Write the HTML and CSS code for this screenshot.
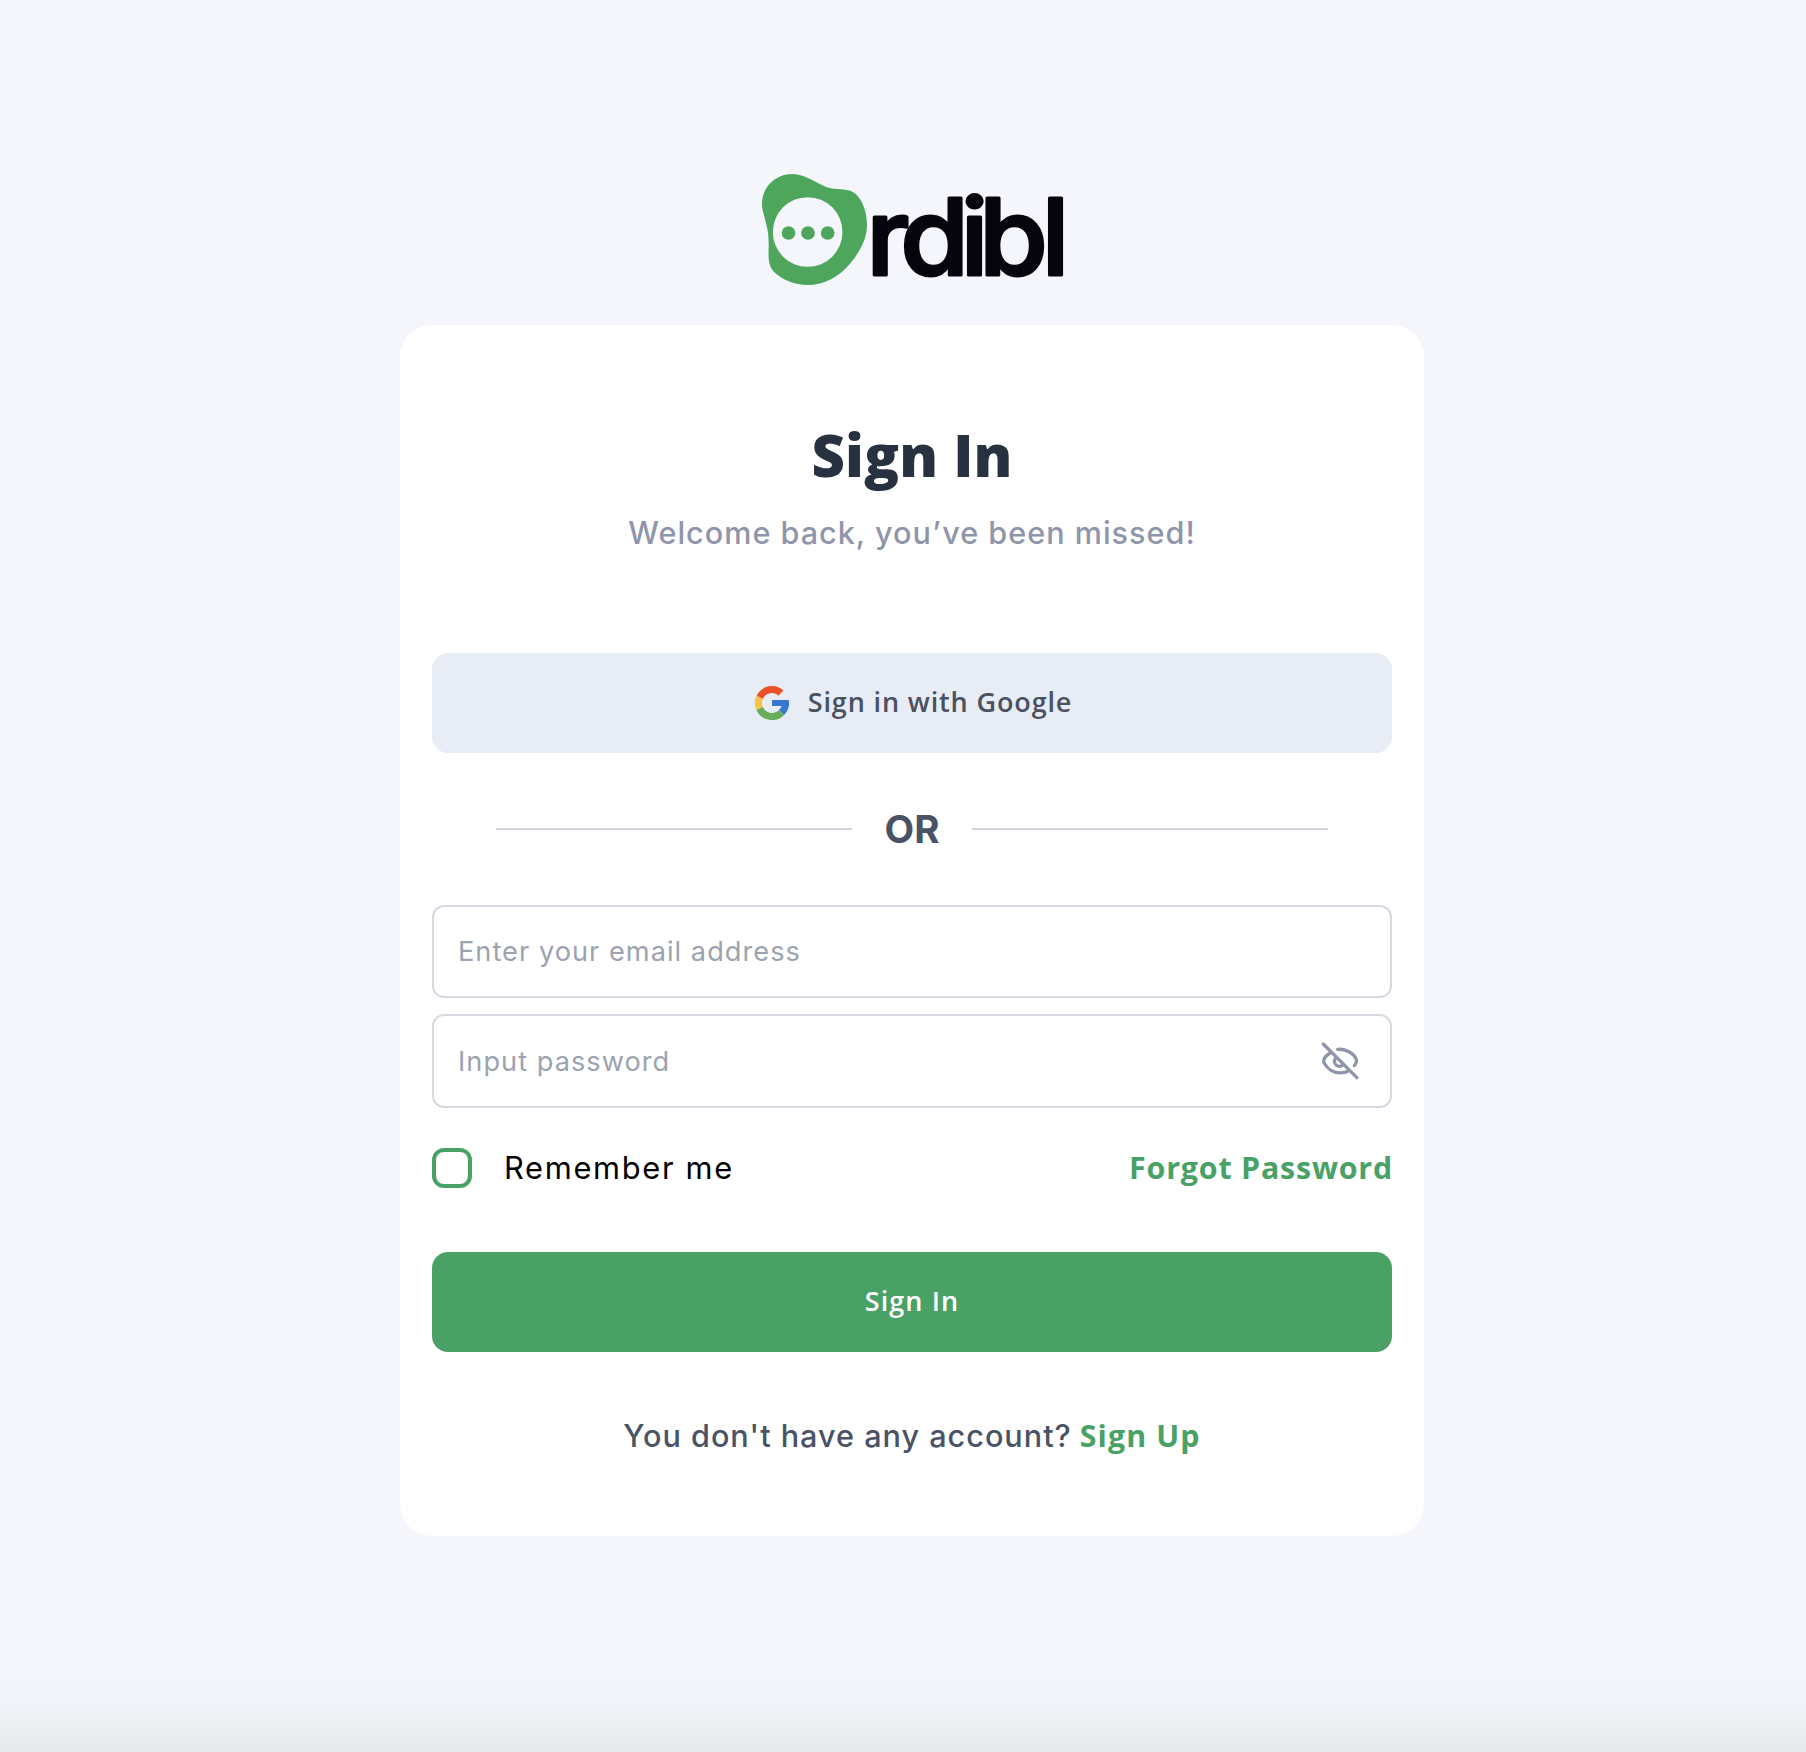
FILE: index.html
```html
<!DOCTYPE html>
<html lang="en">
<head>
<meta charset="utf-8">
<title>Ordibl – Sign In</title>
<link rel="stylesheet" href="styles.css">
</head>
<body>
<main class="page">
  <svg class="logo" viewBox="0 0 344 140" role="img" aria-label="Ordibl">
    <g transform="scale(.33333)">
      <path fill="#4ea65c" d="M156 42C190 42 222 64 250 77C280 91 305 84 330 92C362 103 381 150 381 194C381 236 360 275 330 311C300 347 255 375 202 375C165 375 128 361 103 337C84 317 85 290 86 262C87 215 80 200 75 178C71 160 66 150 66 132C66 80 108 42 156 42Z"/>
      <circle cx="203" cy="216" r="104.500" fill="#f4f6fb"/>
      <g fill="#4ea65c"><circle cx="145.500" cy="219" r="20.500"/><circle cx="204" cy="219" r="20.500"/><circle cx="263" cy="219" r="20.500"/></g>
    </g>
    <text class="wordmark" transform="scale(1.05 1)" x="120.300 152.600 210 227.700 287.200" y="114.800">rdibl</text>
  </svg>

  <section class="card">
    <h1 class="title">Sign In</h1>
    <p class="subtitle">Welcome back, you’ve been missed!</p>

    <button class="btn btn-google" type="button">
      <svg class="google" viewBox="-51 -51 102 102" fill="none" stroke-width="21">
        <path stroke="#f6c344" d="M-37 16.500A40.500 40.500 0 0 1-36.600-17.400"/>
        <path stroke="#ec5228" d="M-36.600-17.400A40.500 40.500 0 0 1 27-30"/>
        <path stroke="#69ad5c" d="M29 28.500A40.500 40.500 0 0 1-37 16.500"/>
        <path stroke="#3977cc" d="M40.500 0A40.500 40.500 0 0 1 29 28.500"/>
        <path fill="#3977cc" d="M0-9H50Q52 0 50 9H0Z"/>
      </svg>
      <span class="btn-label">Sign in with Google</span>
    </button>

    <div class="divider"><span>OR</span></div>

    <form class="form">
      <input class="field" type="email" placeholder="Enter your email address">
      <div class="field-password">
        <input class="field" type="password" placeholder="Input password">
        <svg class="eye" viewBox="0 0 60 60" fill="none" stroke="#8f95aa" stroke-width="3.300" stroke-linecap="round">
          <path d="M27.700 19.300C35 18.800 43 22.800 46 28.500C47.200 31 46.500 33 44.300 35.700"/>
          <path d="M20 23C17 24.800 15 27 13.900 29.300C13.200 31 13.600 32 14.700 33.800C17.500 39 23.500 42.900 30.200 42.900C33.500 42.900 36.500 42.200 39.300 40.600"/>
          <path d="M25.600 28.300A4.900 4.900 0 1 0 33.200 34.500"/>
          <path d="M13.300 14L46.900 47.700"/>
        </svg>
      </div>

      <div class="options">
        <label class="remember"><span class="checkbox"></span><span class="remember-label">Remember me</span></label>
        <a class="link forgot">Forgot Password</a>
      </div>

      <button class="btn btn-primary" type="button"><span class="btn-label">Sign In</span></button>
    </form>

    <p class="signup"><span class="question">You don't have any account?</span><a class="link">Sign Up</a></p>
  </section>
</main>
</body>
</html>
```
FILE: styles.css
```css
* { box-sizing: border-box; }

body {
  margin: 0;
  min-height: 1752px;
  background: linear-gradient(to bottom, #f4f6fb 1670px, #f1f3f8 1708px, #e6e7eb 1752px);
  font-family: Inter, "Liberation Sans", sans-serif;
}

.page {
  display: flex;
  flex-direction: column;
  align-items: center;
  padding: 160px 0 0 18px;
}

.logo {
  display: block;
  width: 344px;
  height: 140px;
}

.wordmark {
  font: 500 106px Inter, sans-serif;
  fill: #06040d;
  stroke: #06040d;
  stroke-width: 3px;
  stroke-linejoin: round;
}

.card {
  width: 1024px;
  height: 1211px;
  margin-top: 25px;
  padding: 95px 32px 0;
  border-radius: 32px;
  background: #fff;
}

.title {
  margin: 0;
  font: 800 58px/70px "Open Sans", sans-serif;
  letter-spacing: 0.1px;
  text-align: center;
  color: #27313f;
}

.subtitle {
  margin: 24px 0 101px;
  font-size: 30.6px;
  font-weight: 500;
  line-height: 38px;
  letter-spacing: 1px;
  text-align: center;
  color: #8f95aa;
}

.btn {
  display: flex;
  align-items: center;
  justify-content: center;
  width: 100%;
  height: 100px;
  padding: 0;
  border: 0;
  border-radius: 16px;
  font: 600 27px/36px "Open Sans", sans-serif;
}

.btn-label { margin-bottom: 3px; }

.btn-google {
  gap: 19px;
  padding-left: 3px;
  background: #e8ecf4;
  color: #4a5261;
  letter-spacing: 0.86px;
}

.google {
  width: 34px;
  height: 34px;
}

.divider {
  display: flex;
  align-items: center;
  gap: 32px;
  height: 48px;
  margin: 52px 64px;
  font-size: 38.5px;
  font-weight: 700;
  color: #4a5366;
}

.divider span {
  width: 56px;
  margin-bottom: 1px;
  text-align: center;
}

.divider::before,
.divider::after {
  content: "";
  flex: 1;
  height: 2px;
  background: #d1d5db;
}

.form {
  display: flex;
  flex-direction: column;
}

.field {
  display: block;
  width: 100%;
  height: 93px;
  padding: 0 24px;
  border: 2px solid #d8d8e2;
  border-radius: 12px;
  background: #fff;
  font: 400 27.2px Inter, sans-serif;
  letter-spacing: 1.02px;
}

.field::placeholder {
  color: #9ca3af;
  opacity: 1;
}

.field-password {
  position: relative;
  margin-top: 16px;
}

.field-password .field { height: 94px; }

.eye {
  position: absolute;
  top: 16px;
  right: 22px;
  width: 60px;
  height: 60px;
}

.options {
  display: flex;
  align-items: center;
  justify-content: space-between;
  height: 40px;
  margin: 40px 0 64px;
}

.remember {
  display: flex;
  align-items: center;
  gap: 32px;
  font-size: 30.8px;
  letter-spacing: 1.7px;
  color: #000;
}

.remember-label { margin-bottom: 2px; }

.checkbox {
  width: 40px;
  height: 40px;
  border: 4px solid #4aa165;
  border-radius: 12px;
}

.link {
  font: 700 30.4px/40px "Open Sans", sans-serif;
  letter-spacing: 0.8px;
  color: #4aa165;
}

.forgot { margin-right: -1px; }

.btn-primary {
  background: #4aa165;
  color: #fff;
  letter-spacing: 1.1px;
}

.signup {
  display: flex;
  align-items: baseline;
  justify-content: center;
  gap: 8px;
  margin: 64px 0 0;
  line-height: 40px;
}

.signup .link { letter-spacing: 1.1px; }

.question {
  font-size: 30.6px;
  font-weight: 500;
  letter-spacing: 1px;
  color: #4a5366;
}
```
